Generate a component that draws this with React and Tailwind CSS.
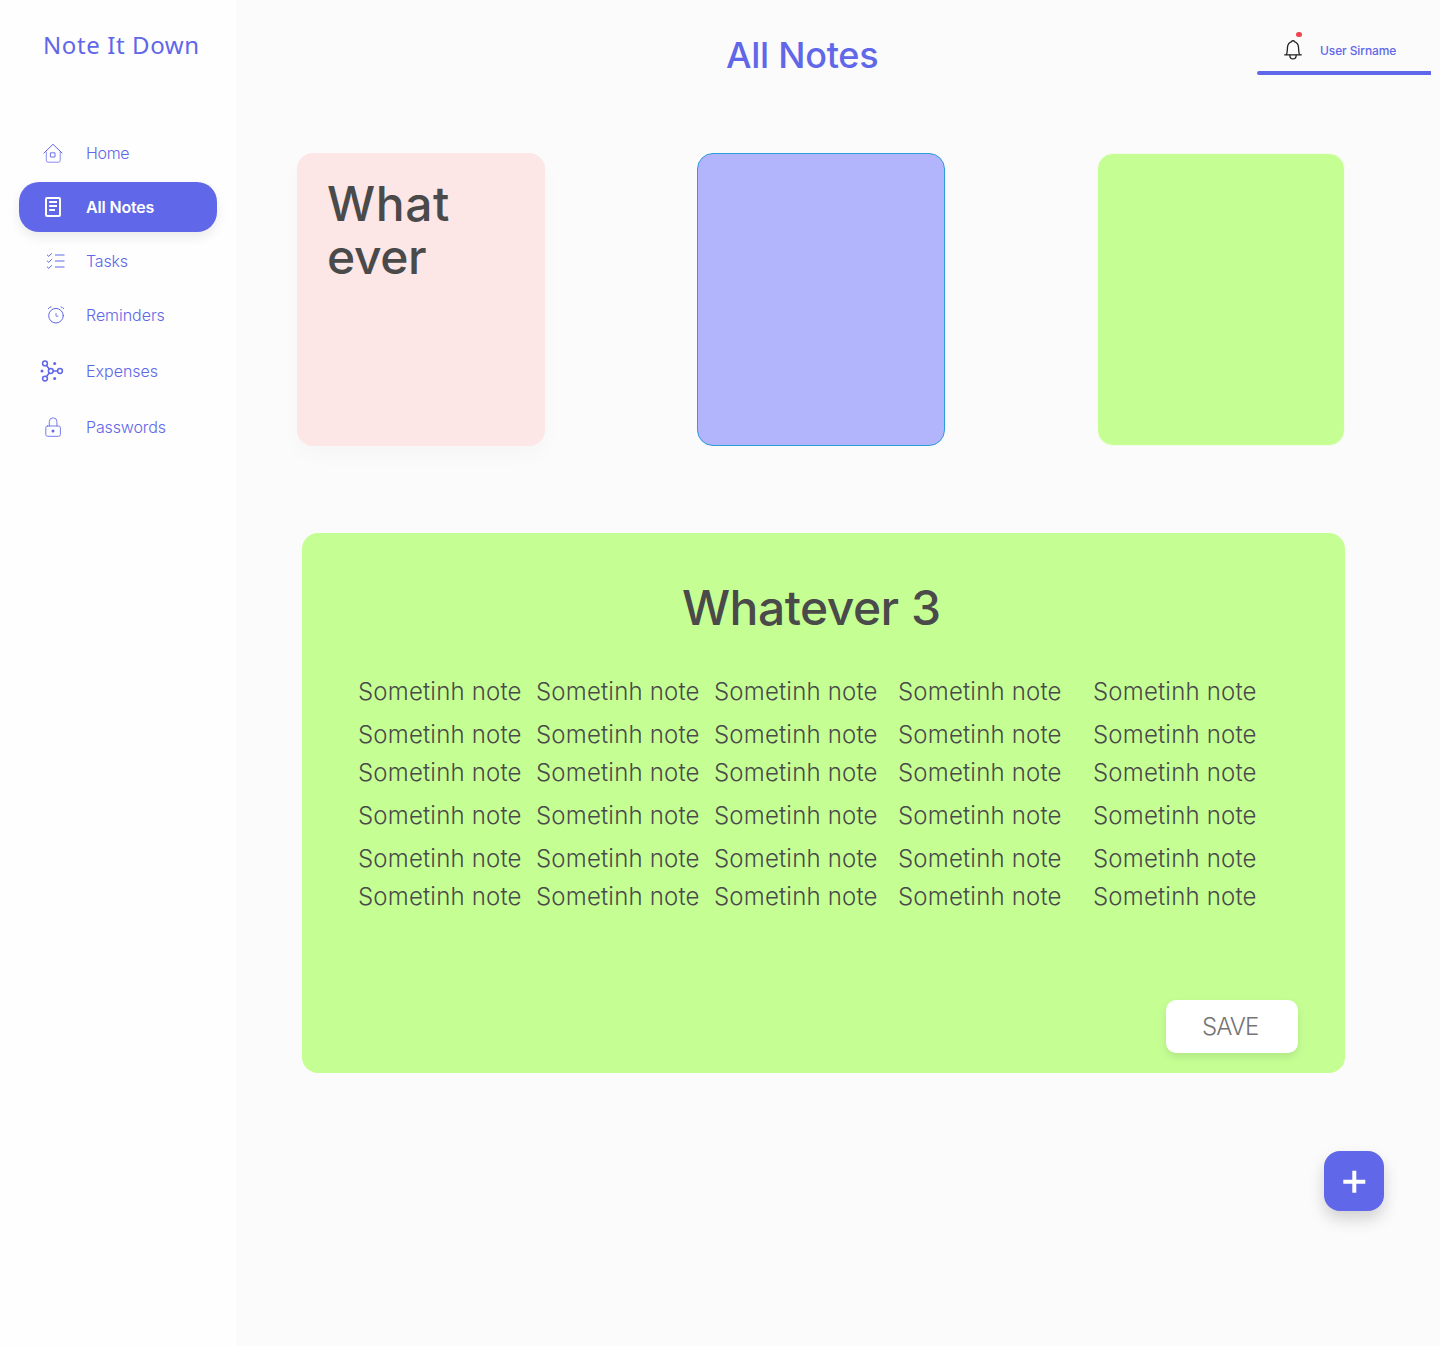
import React from "react";

const stroke = { fill: "none", stroke: "currentColor", strokeLinecap: "round", strokeLinejoin: "round" };

function HomeIcon() {
  return (
    <svg width="40" height="40" viewBox="0 0 40 40" {...stroke}>
      <path d="M11 20 L20 11.3 L29 20" />
      <path d="M13.3 19 V27.3 Q13.3 29.2 15.2 29.2 H25.3 Q27.2 29.2 27.2 27.3 V19" opacity=".75" />
      <rect x="17.8" y="19.8" width="4.2" height="4.2" opacity=".9" />
    </svg>
  );
}

function NotesIcon() {
  return (
    <svg width="40" height="40" viewBox="0 0 40 40" {...stroke} strokeWidth="2">
      <rect x="13" y="11" width="14" height="18" rx="1" />
      <path d="M16.2 15 H24 M16.2 19 H24 M16.2 23 H22" strokeLinecap="butt" />
    </svg>
  );
}

function TasksIcon() {
  return (
    <svg width="40" height="40" viewBox="0 0 40 40" {...stroke}>
      <path d="M14.3 14 L15.8 15.4 L18.5 12.5 M14.3 20 L15.8 21.4 L18.5 18.5 M14.3 26 L15.8 27.4 L18.5 24.5" />
      <path d="M22 14 H31.5 M22 20 H31.5 M22 26 H31.5" strokeLinecap="butt" strokeWidth="2" opacity=".5" />
    </svg>
  );
}

function ClockIcon() {
  return (
    <svg width="40" height="40" viewBox="0 0 40 40" {...stroke}>
      <circle cx="23" cy="20.7" r="7.3" />
      <path d="M15.3 13.6 Q16.3 12.3 18 11.9 M28 11.9 Q29.7 12.3 30.7 13.6" />
      <path d="M23 18.3 V21.2 H25" opacity=".8" />
    </svg>
  );
}

function ExpensesIcon() {
  return (
    <svg width="40" height="40" viewBox="0 0 40 40" {...stroke} strokeWidth="1.5">
      <circle cx="12" cy="12.4" r="2.4" />
      <circle cx="12" cy="27.6" r="2.4" />
      <circle cx="17.8" cy="20" r="2.4" />
      <circle cx="27" cy="20" r="2.4" />
      <path d="M13.5 14.5 L16.3 18 M13.5 25.5 L16.3 22 M20.3 20 H24.5" />
      <g fill="currentColor" stroke="none">
        <circle cx="9" cy="20" r="1.5" />
        <circle cx="21.7" cy="12.4" r="1.5" />
        <circle cx="21.7" cy="27.6" r="1.5" />
      </g>
    </svg>
  );
}

function LockIcon() {
  return (
    <svg width="40" height="40" viewBox="0 0 40 40" {...stroke}>
      <g opacity=".85">
        <rect x="12.8" y="19" width="14.6" height="10.3" rx="1.8" />
        <path d="M16.3 19 V14.6 A3.8 3.8 0 0 1 23.9 14.6 V19" />
      </g>
      <circle cx="20" cy="24" r="1.5" fill="currentColor" stroke="none" />
    </svg>
  );
}

const navItems = [
  { label: "Home", icon: HomeIcon, style: "mb-1 tracking-[-0.02em]" },
  { label: "All Notes", icon: NotesIcon, active: true, style: "mb-1 tracking-[-0.01em]" },
  { label: "Tasks", icon: TasksIcon, style: "mb-1 tracking-[-0.01em]" },
  { label: "Reminders", icon: ClockIcon, style: "mb-1.5 tracking-[-0.003em]" },
  { label: "Expenses", icon: ExpensesIcon, style: "mb-1.5" },
  { label: "Passwords", icon: LockIcon, style: "tracking-[-0.008em]" },
];

function Sidebar() {
  return (
    <aside className="flex w-[236px] shrink-0 flex-col bg-[#fefefe] text-[#6067e8]">
      <div className="mt-[27px] ml-[43px] h-[101px] whitespace-nowrap font-['Noto_Sans',sans-serif] text-2xl leading-9 tracking-[0.025em] [text-shadow:0_21px_0_#fff]">
        Note It Down
      </div>
      <nav className="ml-[19px] w-[198px]">
        {navItems.map(({ label, icon: Icon, active, style }) => (
          <a
            key={label}
            className={`flex h-[50px] items-center rounded-[20px] pl-3.5 ${
              active ? "bg-[#6067e8] font-semibold text-white shadow-[0_5px_12px_rgba(0,0,0,0.08)]" : "font-light"
            } ${style}`}
          >
            <Icon />
            <span className="ml-[13px]">{label}</span>
          </a>
        ))}
      </nav>
    </aside>
  );
}

function UserBar() {
  return (
    <div className="mt-[31px] mr-[9px] h-11 w-[174px]">
      <div className="flex h-10">
        <div className="relative mt-[7px] ml-[26px] h-6 w-5">
          <svg width="20" height="24" viewBox="0 0 20 24" {...stroke} stroke="#222" strokeWidth="1.3">
            <path d="M1.7 16.8 H18.3 M3.2 16.8 C4.6 14.8 4.2 12.5 4.5 9 C4.8 6 6.6 4.3 8.6 3.6 C8.9 2.3 11.1 2.3 11.4 3.6 C13.4 4.3 15.2 6 15.5 9 C15.8 12.5 15.4 14.8 16.8 16.8" />
            <path d="M6.8 17.2 C6.9 22.2 13.1 22.2 13.2 17.2" />
          </svg>
          <span className="absolute -top-1.5 left-[13px] h-[5px] w-1.5 rounded-full bg-[#ee4650]" />
        </div>
        <span className="mt-3 ml-[17px] h-4 whitespace-nowrap text-xs leading-4 font-medium tracking-[-0.009em]">
          User Sirname
        </span>
      </div>
      <div className="h-1 rounded-l-full bg-[#6067e8]" />
    </div>
  );
}

const noteRows = Array.from({ length: 30 }, () => "Sometinh note");

export default function App() {
  return (
    <div className="flex h-[1346px] w-[1440px] overflow-hidden bg-[#fbfbfb] font-['Inter',sans-serif]">
      <Sidebar />
      <main className="flex flex-1 flex-col text-[#4a4a4a]">
        <header className="flex h-[153px] justify-between text-[#6067e8]">
          <h1 className="mt-[30px] ml-[490px] h-[50px] whitespace-nowrap text-4xl leading-[50px] font-medium tracking-[-0.007em]">
            All Notes
          </h1>
          <UserBar />
        </header>
        <section className="ml-[61px] flex w-[1048px] justify-between">
          <article className="h-[293px] w-[248px] rounded-2xl bg-[#fce6e6] pt-6 pl-[30px] text-5xl leading-[53px] font-medium shadow-[0_10px_20px_rgba(0,0,0,0.025)]">
            <span className="block tracking-[0.012em]">What</span>
            <span className="block tracking-[-0.008em]">ever</span>
          </article>
          <article className="h-[293px] w-[248px] rounded-2xl border border-[#2d9cdb] bg-[#b2b4fc]" />
          <article className="h-[293px] w-[248px] rounded-2xl border border-[#f4fbec] bg-[#c5ff94]" />
        </section>
        <section className="mt-[87px] ml-[66px] flex h-[540px] w-[1043px] flex-col rounded-2xl bg-[#c5ff94]">
          <h2 className="mt-12 ml-[380px] h-[54px] whitespace-nowrap text-5xl leading-[54px] font-medium tracking-[-0.011em]">
            Whatever 3
          </h2>
          <div className="mt-[38px] ml-14 grid grid-cols-[178px_178px_184px_195px_178px] grid-rows-[43px_38px_43px_43px_38px_38px] whitespace-nowrap text-2xl leading-[38px] font-light tracking-[0.008em]">
            {noteRows.map((text, i) => (
              <span key={i}>{text}</span>
            ))}
          </div>
          <button className="mt-[84px] mr-[47px] h-[53px] w-[132px] shrink-0 self-end rounded-[10px] bg-white pl-9 text-left text-2xl font-light tracking-[-0.04em] text-[#757575] shadow-[0_4px_8px_rgba(0,0,0,0.1)]">
            SAVE
          </button>
        </section>
        <button className="mt-[78px] mr-14 flex size-[60px] items-center justify-center self-end rounded-2xl bg-[#6067e8] text-white shadow-[0_8px_16px_rgba(0,0,0,0.17)]">
          <svg width="24" height="24" viewBox="0 0 24 24" fill="none" stroke="currentColor" strokeWidth="4">
            <path d="M1.3 12.7 H23.3 M12.3 1.7 V23.7" />
          </svg>
        </button>
      </main>
    </div>
  );
}
